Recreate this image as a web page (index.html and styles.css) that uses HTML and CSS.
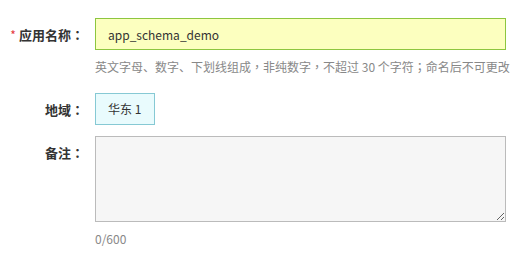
FILE: index.html
```html
<!DOCTYPE html>
<html lang="zh-CN">
<head>
<meta charset="utf-8">
<title>应用</title>
<link rel="stylesheet" href="styles.css">
</head>
<body>
<form class="form">
  <div class="row">
    <label class="label"><span class="req">*</span>应用名称<span class="colon" lang="zh-TW">：</span></label>
    <div class="control">
      <input class="input" type="text" value="app_schema_demo">
      <div class="help">英文字母、数字、下划线组成<span class="punct" lang="zh-TW">，</span>非纯数字<span class="punct" lang="zh-TW">，</span>不超过 30 个字符<span class="punct" lang="zh-TW">；</span>命名后不可更改</div>
    </div>
  </div>
  <div class="row row-region">
    <label class="label">地域<span class="colon" lang="zh-TW">：</span></label>
    <div class="control">
      <span class="region">华东 1</span>
    </div>
  </div>
  <div class="row row-note">
    <label class="label">备注<span class="colon" lang="zh-TW">：</span></label>
    <div class="control">
      <textarea class="textarea"></textarea>
      <div class="count">0/600</div>
    </div>
  </div>
</form>
</body>
</html>
```
FILE: styles.css
```css
html, body {
  margin: 0;
  padding: 0;
  background: #fff;
}
body {
  font-family: "Noto Sans CJK SC", "Liberation Sans", sans-serif;
  font-size: 12px;
  color: #333;
}
.form {
  padding-top: 18px;
}
.row {
  display: grid;
  grid-template-columns: 84px 411px;
  column-gap: 11px;
}
.row-region {
  margin-top: 17px;
}
.row-note {
  margin-top: 10px;
}
.label {
  text-align: right;
  font-size: 13px;
  font-weight: bold;
  line-height: 33px;
  color: #333;
  white-space: nowrap;
}
.colon,
.punct {
  font-family: "Noto Sans CJK TC", "Noto Sans CJK SC", sans-serif;
}
.req {
  color: #e4393c;
  font-size: 12px;
  font-weight: normal;
  margin-right: 3px;
}
.control {
  display: flex;
  flex-direction: column;
  align-items: flex-start;
}
.input {
  box-sizing: border-box;
  width: 411px;
  height: 32px;
  margin: 0;
  padding: 0 12px;
  border: 1px solid #8dc63f;
  background: #fcffbf;
  font-family: inherit;
  font-size: 12px;
  color: #333;
  outline: none;
}
.help {
  margin-top: 8px;
  line-height: 18px;
  color: #888;
  white-space: nowrap;
}
.region {
  box-sizing: border-box;
  height: 32px;
  line-height: 30px;
  padding: 0 13px 0 12px;
  border: 1px solid #86c9d4;
  background: #e9fbfd;
  color: #333;
}
.textarea {
  box-sizing: border-box;
  display: block;
  width: 411px;
  height: 86px;
  margin: 0;
  padding: 6px 10px;
  border: 1px solid #bbb;
  background: #f6f6f6;
  font-family: inherit;
  font-size: 12px;
  outline: none;
}
.count {
  margin-top: 8px;
  line-height: 18px;
  color: #888;
}
```
